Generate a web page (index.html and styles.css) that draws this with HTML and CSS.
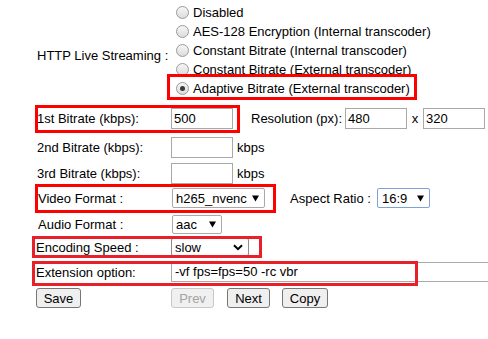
FILE: index.html
```html
<!DOCTYPE html>
<html>
<head>
<meta charset="utf-8">
<link rel="stylesheet" href="styles.css">
</head>
<body>
<div class="page">
  <form class="form">
    <div class="row row-hls">
      <div class="label label-hls">HTTP Live Streaming :</div>
      <div class="radios">
        <div class="radio-item"><span class="radio"></span><span>Disabled</span></div>
        <div class="radio-item"><span class="radio"></span><span>AES-128 Encryption (Internal transcoder)</span></div>
        <div class="radio-item"><span class="radio"></span><span>Constant Bitrate (Internal transcoder)</span></div>
        <div class="radio-item"><span class="radio"></span><span>Constant Bitrate (External transcoder)</span></div>
        <div class="radio-item"><span class="radio checked"></span><span>Adaptive Bitrate (External transcoder)</span></div>
      </div>
    </div>

    <div class="row r1">
      <div class="label">1st Bitrate (kbps):</div>
      <div class="input small">500</div>
      <span class="res-label">Resolution (px):</span>
      <div class="input small">480</div>
      <span class="times">x</span>
      <div class="input small">320</div>
    </div>

    <div class="row r2">
      <div class="label">2nd Bitrate (kbps):</div>
      <div class="input small"></div>
      <span class="unit">kbps</span>
    </div>

    <div class="row r3">
      <div class="label">3rd Bitrate (kbps):</div>
      <div class="input small"></div>
      <span class="unit">kbps</span>
    </div>

    <div class="row r4">
      <div class="label">Video Format :</div>
      <div class="select sel-video"><span>h265_nvenc</span><svg class="tri" width="7" height="7" viewBox="0 0 7 7"><path d="M0 0.5 H7 L3.5 6.5 Z" fill="#000"/></svg></div>
      <span class="aspect-label">Aspect Ratio :</span>
      <div class="select sel-aspect"><span>16:9</span><svg class="tri" width="7" height="7" viewBox="0 0 7 7"><path d="M0 0.5 H7 L3.5 6.5 Z" fill="#000"/></svg></div>
    </div>

    <div class="row r5">
      <div class="label">Audio Format :</div>
      <div class="select sel-audio"><span>aac</span><svg class="tri" width="7" height="7" viewBox="0 0 7 7"><path d="M0 0.5 H7 L3.5 6.5 Z" fill="#000"/></svg></div>
    </div>

    <div class="row r6">
      <div class="label">Encoding Speed :</div>
      <div class="select sel-speed"><span>slow</span>
        <svg class="chev" width="10" height="7" viewBox="0 0 10 7"><path d="M1 1.2 L5 5.2 L9 1.2" fill="none" stroke="#000" stroke-width="2"/></svg>
      </div>
    </div>

    <div class="row r7">
      <div class="label">Extension option:</div>
      <div class="input wide">-vf fps=fps=50 -rc vbr</div>
    </div>

    <div class="row r8">
      <button type="button" class="btn btn-save">Save</button>
      <button type="button" class="btn btn-prev" disabled>Prev</button>
      <button type="button" class="btn btn-next">Next</button>
      <button type="button" class="btn btn-copy">Copy</button>
    </div>
  </form>

  <div class="mark m-adaptive"></div>
  <div class="mark m-bitrate"></div>
  <div class="mark m-video"></div>
  <div class="mark alt m-speed"></div>
  <div class="mark alt m-ext"></div>
</div>
</body>
</html>
```

FILE: styles.css
```css
html, body {
  margin: 0;
  padding: 0;
  background: #fff;
  overflow: hidden;
}
body {
  font-family: "Liberation Sans", Arial, sans-serif;
  font-size: 13px;
  color: #000;
}
.page {
  position: relative;
  width: 488px;
  height: 339px;
  overflow: hidden;
}
.form {
  padding-left: 37px;
}
.row {
  display: flex;
  align-items: center;
  white-space: nowrap;
}
.label {
  width: 134px;
  flex: none;
}
.row-hls {
  align-items: flex-start;
  height: 104px;
}
.label-hls {
  padding-top: 48px;
  line-height: 15px;
}
.radios {
  padding-top: 3px;
  margin-left: 5px;
}
.radio-item {
  display: flex;
  align-items: center;
  height: 19px;
}
.radio {
  width: 11px;
  height: 11px;
  border: 1px solid #9a9a9a;
  border-radius: 50%;
  background: linear-gradient(#f6f6f6, #dcdcdc);
  margin-right: 4px;
  margin-top: -1px;
  position: relative;
  flex: none;
}
.radio.checked::after {
  content: "";
  position: absolute;
  left: 3px;
  top: 3px;
  width: 5px;
  height: 5px;
  border-radius: 50%;
  background: #3a3a3a;
}

.input {
  box-sizing: border-box;
  height: 21px;
  border: 1px solid #a9a9a9;
  background: #fff;
  padding: 0 2px;
  line-height: 19px;
  font-size: 13px;
  flex: none;
}
.input.small { width: 62px; }
.input.wide { width: 330px; height: 20px; line-height: 18px; padding-left: 3px; }

.r1 { height: 29px; }
.r2 { height: 29px; }
.r3 { height: 23px; }
.r4 { height: 26px; }
.r5 { height: 26px; }
.r6 { height: 20px; }
.r7 { height: 30px; }
.r8 { height: 22px; }

.r4 .label, .r5 .label { padding-left: 1px; width: 133px; }
.r6 .label, .r7 .label { margin-left: -1px; width: 135px; }

.res-label {
  margin-left: 18px;
  width: 94px;
}
.times {
  width: 16px;
  text-align: center;
}
.unit {
  margin-left: 4px;
}

.select {
  box-sizing: border-box;
  display: flex;
  align-items: center;
  justify-content: space-between;
  border: 1px solid #a9a9a9;
  border-radius: 2px;
  background: #fff;
  padding: 0 5px 0 3px;
  flex: none;
}
.tri {
  display: block;
}
.sel-video {
  width: 93px;
  height: 20px;
  margin-left: 1px;
}
.aspect-label {
  margin-left: 25px;
  width: 87px;
}
.sel-aspect {
  width: 53px;
  height: 20px;
  border-color: #7ea1d8;
  padding-left: 4px;
}
.sel-audio {
  width: 50px;
  height: 19px;
  margin-left: 1px;
}
.sel-speed {
  width: 78px;
  height: 18px;
  border-color: #8d8d8d;
  padding-right: 5px;
}
.chev { display: block; }

.btn {
  box-sizing: border-box;
  height: 20px;
  font-family: "Liberation Sans", Arial, sans-serif;
  font-size: 13px;
  color: #000;
  background: #efefef;
  border: 1px solid #767676;
  border-radius: 3px;
  padding: 0;
  flex: none;
}
.btn-save { width: 45px; margin-left: -1px; }
.btn-prev {
  width: 43px;
  margin-left: 90px;
  color: #a3a3a3;
  background: #f0f0f0;
  border-color: #c8c8c8;
}
.btn-next { width: 43px; margin-left: 13px; }
.btn-copy { width: 46px; margin-left: 12px; }

.mark {
  position: absolute;
  box-sizing: border-box;
  border: 3px solid #ff0000;
}
.mark.alt { border-color: #e8202a; }
.m-adaptive { left: 167px; top: 74px; width: 250px; height: 26px; }
.m-bitrate { left: 35px; top: 105px; width: 205px; height: 28px; }
.m-video { left: 35px; top: 184px; width: 241px; height: 29px; }
.m-speed { left: 32px; top: 236px; width: 230px; height: 22px; }
.m-ext { left: 32px; top: 261px; width: 386px; height: 25px; }
```
